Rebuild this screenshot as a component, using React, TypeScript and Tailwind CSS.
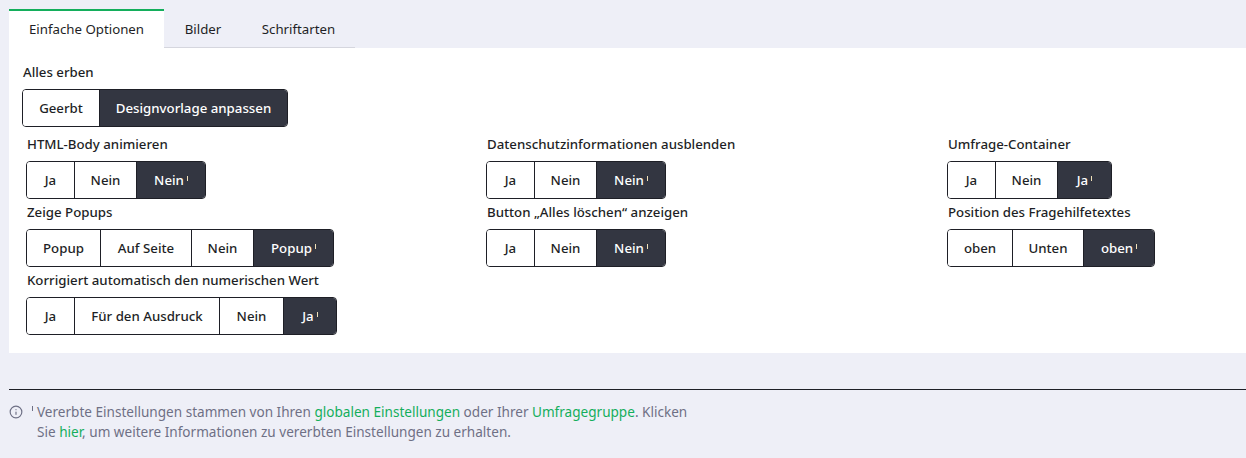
import React from 'react'
import { Info } from 'lucide-react'

const font = "font-['Noto_Sans','Open_Sans',sans-serif]"

interface ToggleOption {
  label: string
  width: number
  inherited?: boolean
}

interface ToggleGroupProps {
  options: ToggleOption[]
}

// buttons have fixed widths from the reference, text is centered
const ToggleGroup: React.FC<ToggleGroupProps> = ({ options }) => {
  return (
    <div className="flex h-[38px] w-fit overflow-hidden rounded-[4px] border border-[#1e1f26]">
      {options.map((opt, i) => {
        const active = i === options.length - 1
        return (
          <div
            key={i}
            style={{ width: opt.width }}
            className={`flex items-center justify-center pt-[2px] text-[13.25px] font-medium ${
              active ? 'bg-[#333641] text-white' : 'bg-white text-[#1e1f26]'
            } ${i > 0 ? 'border-l border-[#1e1f26]' : ''}`}
          >
            {opt.label}
            {opt.inherited && <span className="ml-[3px] mb-[5px] h-[5px] w-px bg-[#f0e0b8]" />}
          </div>
        )
      })}
    </div>
  )
}

const Field: React.FC<{ label: string; options: ToggleOption[] }> = ({ label, options }) => {
  return (
    <div className="h-[68px]">
      <div className="mb-[7px] h-[21px] pt-px pl-px text-[13.25px] leading-[21px] font-medium text-[#1e1f26]">{label}</div>
      <ToggleGroup options={options} />
    </div>
  )
}

export default function App() {
  return (
    <div className={`h-[458px] w-[1246px] overflow-hidden bg-[#eeeff7] pl-[9px] pt-[9px] ${font}`}>
      {/* Tabs */}
      <div className="flex h-[39px]">
        <div className="flex w-[155px] items-center justify-center border-t-2 border-[#14ae5c] bg-white text-[13.25px] text-[#1e1f26]">
          Einfache Optionen
        </div>
        <div className="flex border-b border-[#d5d6de]">
          <div className="flex w-[78px] items-center justify-center pt-[3px] text-[13.25px] text-[#1e1f26]">Bilder</div>
          <div className="flex w-[113px] items-center justify-center pt-[3px] text-[13.25px] text-[#1e1f26]">Schriftarten</div>
        </div>
      </div>

      {/* Panel */}
      <div className="h-[305px] bg-white pl-[13px] pt-[14px]">
        <div className="mb-[6px] h-[21px] pl-px text-[13.25px] leading-[21px] font-medium text-[#1e1f26]">Alles erben</div>
        <ToggleGroup
          options={[
            { label: 'Geerbt', width: 76 },
            { label: 'Designvorlage anpassen', width: 188 },
          ]}
        />
        <div className="mt-[6px] grid grid-cols-[460px_461px_1fr] pl-[4px]">
          <Field
            label="HTML-Body animieren"
            options={[
              { label: 'Ja', width: 47 },
              { label: 'Nein', width: 62 },
              { label: 'Nein', width: 69, inherited: true },
            ]}
          />
          <Field
            label="Datenschutzinformationen ausblenden"
            options={[
              { label: 'Ja', width: 47 },
              { label: 'Nein', width: 62 },
              { label: 'Nein', width: 69, inherited: true },
            ]}
          />
          <Field
            label="Umfrage-Container"
            options={[
              { label: 'Ja', width: 47 },
              { label: 'Nein', width: 62 },
              { label: 'Ja', width: 54, inherited: true },
            ]}
          />
          <Field
            label="Zeige Popups"
            options={[
              { label: 'Popup', width: 73 },
              { label: 'Auf Seite', width: 91 },
              { label: 'Nein', width: 62 },
              { label: 'Popup', width: 80, inherited: true },
            ]}
          />
          <Field
            label="Button „Alles löschen“ anzeigen"
            options={[
              { label: 'Ja', width: 47 },
              { label: 'Nein', width: 62 },
              { label: 'Nein', width: 69, inherited: true },
            ]}
          />
          <Field
            label="Position des Fragehilfetextes"
            options={[
              { label: 'oben', width: 64 },
              { label: 'Unten', width: 71 },
              { label: 'oben', width: 71, inherited: true },
            ]}
          />
          <Field
            label="Korrigiert automatisch den numerischen Wert"
            options={[
              { label: 'Ja', width: 47 },
              { label: 'Für den Ausdruck', width: 145 },
              { label: 'Nein', width: 64 },
              { label: 'Ja', width: 53, inherited: true },
            ]}
          />
        </div>
      </div>

      {/* Footer note */}
      <div className="mt-[36px] flex border-t border-[#1e1f26] pt-[12px] text-[13.57px] leading-[20px] text-[#6e7085]">
        <Info className="mt-[3px] h-[14px] w-[14px] shrink-0 text-[#6e7085]" strokeWidth={2} />
        <span className="ml-[9px] mr-[4px] mt-[4px] h-[5px] w-px shrink-0 bg-[#6e7085]" />
        <p className="w-[660px]">
          Vererbte Einstellungen stammen von Ihren <span className="text-[#14ae5c]">globalen Einstellungen</span> oder
          Ihrer <span className="text-[#14ae5c]">Umfragegruppe</span>. Klicken Sie{' '}
          <span className="text-[#14ae5c]">hier</span>, um weitere Informationen zu vererbten Einstellungen zu erhalten.
        </p>
      </div>
    </div>
  )
}
